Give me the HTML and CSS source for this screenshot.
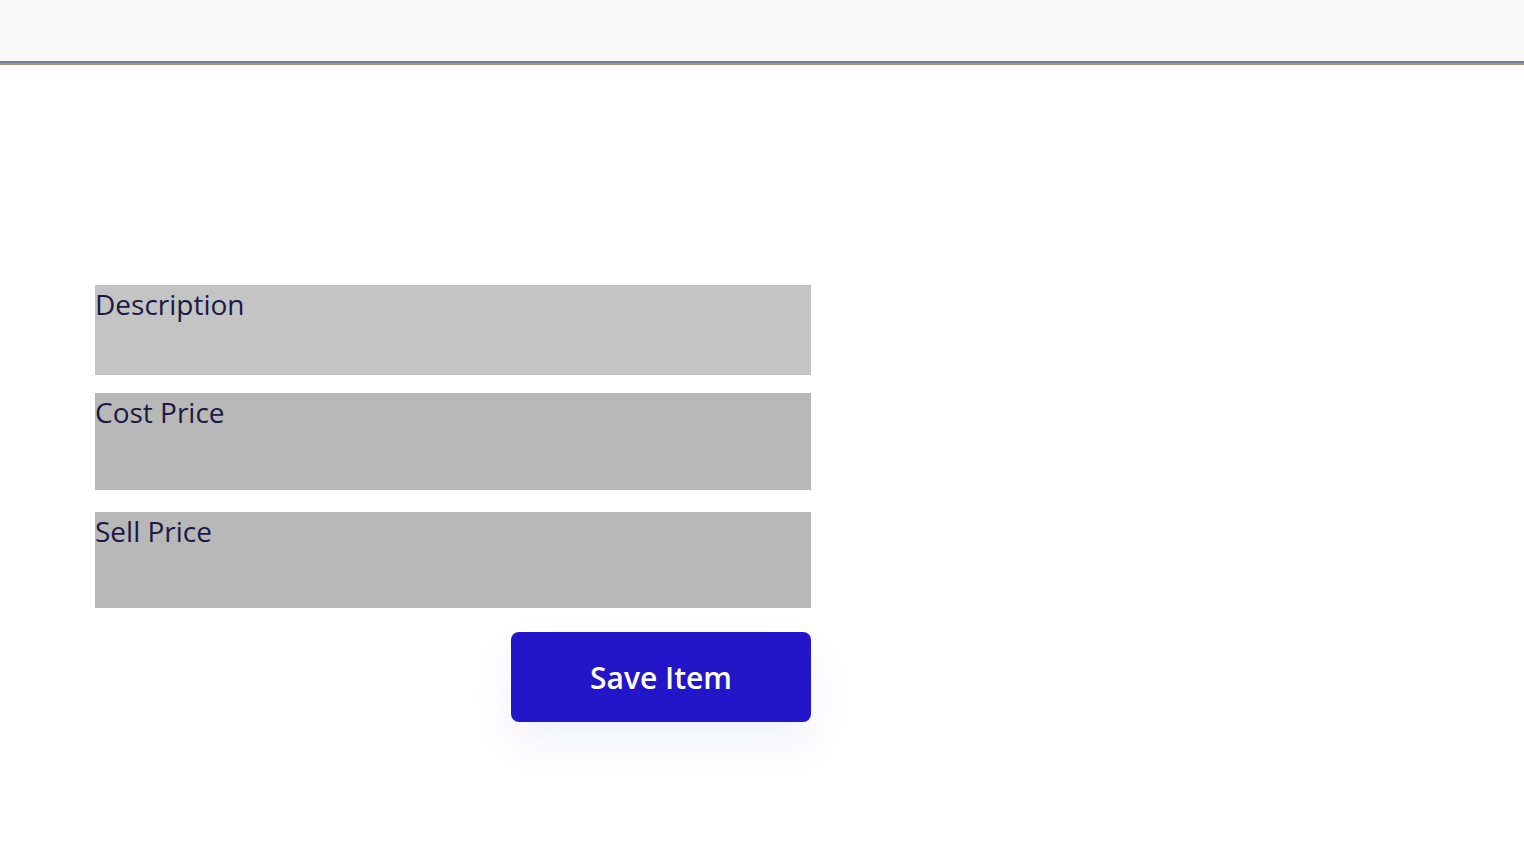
FILE: index.html
```html
<!DOCTYPE html>
<html lang="en">
<head>
    <meta charset="UTF-8">
    <meta name="viewport" content="width=device-width, initial-scale=1.0">
    <title>Add Item</title>
    <link rel="stylesheet" href="styles.css">
</head>
<body>
    <header class="topbar"></header>

    <div class="item-form">
        <div class="field field-desc">Description</div>
        <div class="field field-cost">Cost Price</div>
        <div class="field field-sell">Sell Price</div>
        <div class="actions">
            <button class="save-btn">Save Item</button>
        </div>
    </div>
</body>
</html>
```

FILE: styles.css
```css
body {
    font-family: "Open Sans", Arial, sans-serif;
    margin: 0;
    padding: 0;
    background-color: #ffffff;
}

.topbar {
    height: 61px;
    background-color: #f9f9f9;
    border-bottom: 2px solid #7280a0;
    box-shadow: 0 2px 0 #b5926e;
}

.item-form {
    width: 716px;
    margin: 222px 0 0 95px;
    padding-bottom: 120px;
    display: flex;
    flex-direction: column;
}

.field {
    color: #1b1a45;
    font-size: 28px;
    line-height: 38px;
    box-sizing: border-box;
}

.field-desc {
    height: 90px;
    background-color: #c4c4c4;
}

.field-cost {
    height: 97px;
    margin-top: 18px;
    background-color: #b8b8b8;
}

.field-sell {
    height: 96px;
    margin-top: 22px;
    background-color: #b8b8b8;
}

.actions {
    display: flex;
    justify-content: flex-end;
    margin-top: 24px;
}

.save-btn {
    width: 300px;
    height: 90px;
    background-color: #2316c8;
    color: white;
    border: none;
    border-radius: 8px;
    font-family: "Open Sans", Arial, sans-serif;
    font-size: 30px;
    font-weight: 600;
    box-shadow: 0 20px 40px rgba(70, 70, 220, 0.08);
    cursor: pointer;
}
```
